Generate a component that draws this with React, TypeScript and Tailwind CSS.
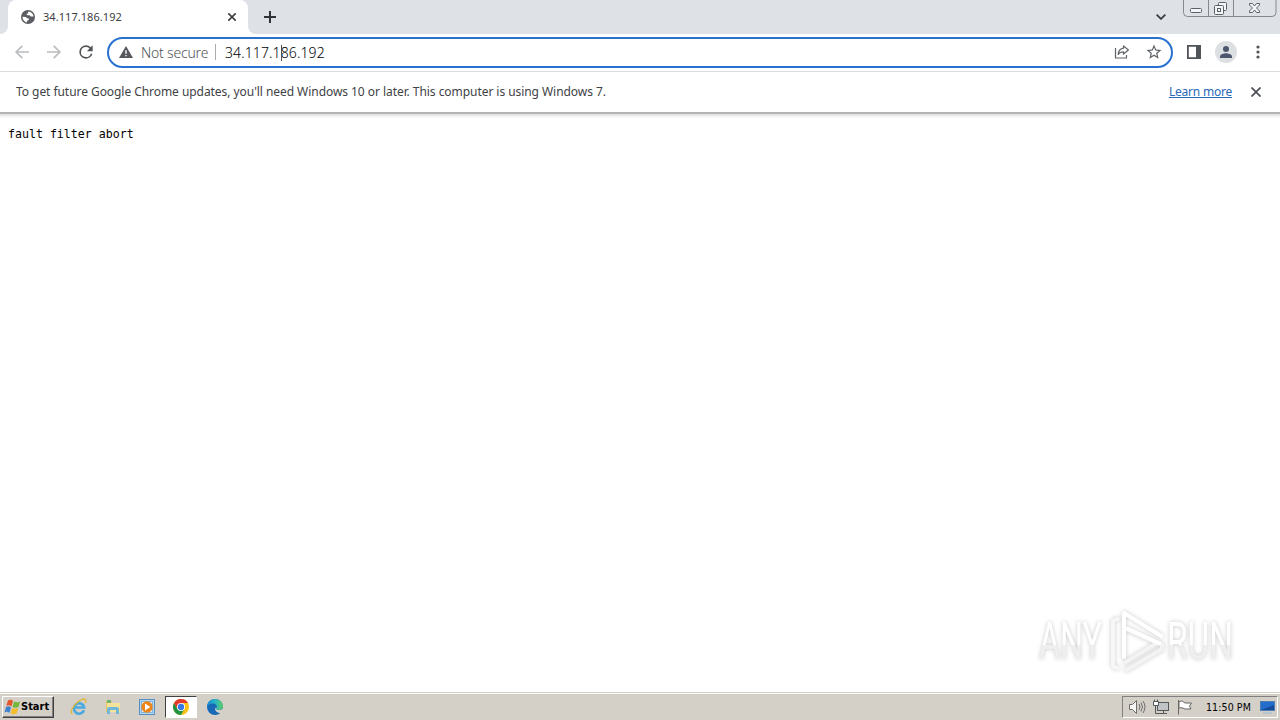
import type { ReactNode } from 'react';

function IconBox({ size, className, children }: { size: number; className?: string; children: ReactNode }) {
  return (
    <svg width={size} height={size} viewBox="0 0 24 24" fill="currentColor" className={`shrink-0 ${className ?? ''}`}>
      {children}
    </svg>
  );
}

function TabStrip() {
  return (
    <div className="relative flex h-[34px] bg-[#dee1e6] text-[#3c4043]">
      <div className="relative ml-2 flex h-full w-60 items-center rounded-t-lg bg-white">
        <svg className="absolute bottom-0 -left-2" width="8" height="8" fill="white">
          <path d="M8 0v8H0a8 8 0 0 0 8-8z" />
        </svg>
        <svg className="absolute -right-2 bottom-0" width="8" height="8" fill="white">
          <path d="M0 0v8h8a8 8 0 0 1-8-8z" />
        </svg>
        <svg className="ml-[13px]" width="14" height="14" viewBox="0 0 14 14">
          <circle cx="7" cy="7" r="7" fill="#5a5d61" />
          <path d="M7.3 1.5c2.8.1 5 2.2 5.2 5H9.8L8.700 5.300H6.300L5.400 4.100l1.500-.7zM1.500 6.800l3.300.2 1.300 1.300h1.600v1.900l-1.700.5v1.700C3.300 12 1.500 9.700 1.500 6.800z" fill="white" />
        </svg>
        <span className="ml-2 text-[11px] tracking-[0.005em]">34.117.186.192</span>
        <svg className="absolute top-[13px] left-[220px]" width="8" height="8" stroke="#3c4043" strokeWidth="1.600">
          <path d="M0.300 0.300l7.400 7.400M7.700 0.300l-7.400 7.400" />
        </svg>
      </div>
      <svg className="mt-[11px] ml-4" width="12" height="12" stroke="#303338" strokeWidth="2">
        <path d="M6 0v12M0 6h12" />
      </svg>
      <svg className="mt-[14px] ml-auto" width="10" height="6" fill="none" stroke="#3c4043" strokeWidth="1.800">
        <path d="M0.600 0.600L5 4.900 9.400 0.600" />
      </svg>
      <svg className="mr-[3px] ml-[17px]" width="94" height="17" fill="none" stroke="#85898f">
        <path d="M0.500 0v12.500a4 4 0 0 0 4 4h84.500a4 4 0 0 0 4-4V0M25.500 0v16M50.500 0v16" />
        <g stroke="#5c6168">
          <rect x="7.500" y="8.500" width="11" height="4" rx="1" fill="#f4f5f7" />
          <rect x="35.500" y="2.500" width="8" height="8" rx="1" fill="#f4f5f7" />
          <rect x="31.500" y="5.500" width="9" height="9" rx="1" fill="#f4f5f7" />
          <rect x="34.500" y="8.500" width="3" height="3" />
          <path d="M66.500 3.500h3l2 2.500 2-2.500h3v1.500L73.500 8l3 3v1.500h-3l-2-2.500-2 2.500h-3V11l3-3-3-3z" fill="#f4f5f7" />
        </g>
      </svg>
    </div>
  );
}

function Toolbar() {
  return (
    <div className="flex h-[38px] items-center border-b border-[#dadce0] bg-white pb-px text-[#5f6368]">
      <svg className="ml-[15px]" width="14" height="14" fill="none" stroke="#babcbe" strokeWidth="1.700">
        <path d="M14 7H1.300M7.300 0.800L1.100 7l6.200 6.200" />
      </svg>
      <svg className="ml-[18px]" width="14" height="14" fill="none" stroke="#babcbe" strokeWidth="1.700">
        <path d="M0 7h12.700M6.700 0.800L12.900 7l-6.200 6.200" />
      </svg>
      <IconBox size={20} className="ml-[15px] text-[#505357]">
        <path d="M17.650 6.350A7.960 7.960 0 0 0 12 4a8 8 0 1 0 7.730 10h-2.080A6 6 0 1 1 12 6c1.660 0 3.140.69 4.220 1.780L13 11h7V4z" />
      </IconBox>
      <div className="ml-[11px] flex h-[31px] w-[1066px] items-center rounded-full border-2 border-[#2871d0]">
        <svg className="ml-[10px]" width="14" height="12" viewBox="0 0 14 12">
          <path d="M7 0l7 12H0z" fill="#55585c" />
          <path d="M6.300 4.300h1.400v3.500H6.300zM6.300 8.900h1.400v1.400H6.300z" fill="white" />
        </svg>
        <span className="ml-2 w-[68px] pt-px text-sm font-light tracking-[-0.014em] whitespace-nowrap text-[#505357]">Not secure</span>
        <div className="ml-[6px] h-4 w-px bg-[#a9abae]" />
        <div className="relative ml-[9px] pt-px text-sm font-light tracking-[0.008em] text-black">
          34.117.186.192
          <div className="absolute top-[3px] left-[56px] h-4 w-px bg-[#505050]" />
        </div>
        <svg className="ml-auto" width="16" height="14" fill="none" stroke="#5f6368" strokeWidth="1.200">
          <path d="M1.500 3v10h11v-3" />
          <path d="M9.500 0.900L14.400 5 9.500 9V6.800C7 6.700 5.500 7.500 4.200 9.400 4.500 6 6.300 3.700 9.500 3.200z" strokeLinejoin="round" />
        </svg>
        <IconBox size={18} className="mr-[8px] ml-[15px]">
          <path d="M22 9.240l-7.190-.62L12 2 9.190 8.630 2 9.240l5.460 4.730L5.820 21 12 17.270 18.180 21l-1.630-7.030zM12 15.400l-3.760 2.270 1-4.280-3.320-2.880 4.380-.38L12 6.100l1.710 4.040 4.380.38-3.320 2.880 1 4.280z" />
        </IconBox>
      </div>
      <svg className="ml-[14px]" width="14" height="14">
        <path d="M0 0h14v14H0zM1.800 1.800v10.400h7.200V1.800z" fill="#505358" fillRule="evenodd" />
      </svg>
      <div className="ml-[14px] flex size-[22px] items-center justify-center rounded-full bg-[#dde0e3]">
        <svg width="12" height="12" fill="#4b566c">
          <circle cx="6" cy="3" r="3" />
          <path d="M0 12V10.400C0 8.200 4 7.200 6 7.200s6 1 6 3.200V12z" />
        </svg>
      </div>
      <svg className="ml-[19px]" width="4" height="14" fill="#505357">
        <circle cx="2" cy="2" r="1.600" />
        <circle cx="2" cy="7" r="1.600" />
        <circle cx="2" cy="12" r="1.600" />
      </svg>
    </div>
  );
}

function InfoBar() {
  return (
    <>
      <div className="flex h-10 items-center bg-white pl-4 text-xs text-[#404246]">
        <span className="tracking-[-0.0045em] whitespace-nowrap">
          To get future Google Chrome updates, you'll need Windows 10 or later. This computer is using Windows 7.
        </span>
        <a className="ml-auto tracking-[-0.018em] text-[#2a68ba] underline">Learn more</a>
        <svg className="mr-[19px] ml-[19px]" width="10" height="10" stroke="#505357" strokeWidth="1.800">
          <path d="M0.500 0.500l9 9M9.500 0.500l-9 9" />
        </svg>
      </div>
      <div className="h-[2px] bg-[#b4b4b4]" />
      <div className="h-[4px] bg-linear-to-b from-[#dedede] to-white" />
    </>
  );
}

function Watermark() {
  return (
    <svg
      className="absolute right-[34px] bottom-[14px] overflow-visible drop-shadow-[0_0_2px_rgba(0,0,0,0.22)]"
      width="210" height="72" fontFamily="Roboto, sans-serif" fontSize="52"
    >
      <defs>
        <linearGradient id="fade" x1="0" y1="0" x2="0" y2="1">
          <stop offset="0.550" stopColor="#fff" />
          <stop offset="0.560" stopColor="#efefef" />
        </linearGradient>
      </defs>
      <text x="3" y="53" textLength="63" lengthAdjust="spacingAndGlyphs" fill="url(#fade)">ANY</text>
      <text x="131" y="53" textLength="66" lengthAdjust="spacingAndGlyphs" fill="url(#fade)">RUN</text>
      <g fill="none" strokeWidth="4" strokeLinejoin="round" transform="translate(2 1)">
        <path d="M81 11l-6 3v45l6 3" stroke="#f7f7f7" />
        <path d="M86 52V21l33 15-33 20M87 64l37-22v-6" stroke="#f3f3f3" />
        <path d="M86 51V6l39 24M88 21l35 16" stroke="#fff" />
      </g>
    </svg>
  );
}

function StartButton() {
  return (
    <div className="ml-[2px] flex h-[22px] w-[52px] items-center border border-t-white border-r-[#404040] border-b-[#404040] border-l-white bg-[#d4d0c8] shadow-[inset_-1px_-1px_0_#808080]">
      <svg className="ml-px" width="17" height="16">
        <path d="M4 1.500q3-1.500 5 .5L7.500 7.500Q5 5.500 2.300 7z" fill="#e4572a" />
        <path d="M10 2.500q3 1.500 6 0L14.500 8q-3 1.500-6 0z" fill="#75b73b" />
        <path d="M2 8q3-1.500 5 .5L5.500 14Q3 12 .5 13.500z" fill="#3f83cf" />
        <path d="M8.200 9q3 1.500 6 0l-1.500 5.500q-3 1.500-6 0z" fill="#f5bd2c" />
      </svg>
      <span className="pt-px font-['DejaVu_Sans_Condensed','DejaVu_Sans',sans-serif] text-[11px] font-bold text-black">Start</span>
    </div>
  );
}

function InternetExplorerIcon() {
  return (
    <svg width="18" height="18" fill="none">
      <path d="M14 12.200A5.200 5.200 0 1 1 14.200 9.500H5" stroke="#4ba9df" strokeWidth="2.600" />
      <path d="M2.500 15.500C-1 15 3 7.500 8.500 3.500s9-3 6.500 1.500" stroke="#e3b72e" strokeWidth="1.300" />
    </svg>
  );
}

function ExplorerIcon() {
  return (
    <svg width="18" height="18">
      <path d="M2 3h5l1 2h7v9H2z" fill="#e7c65b" />
      <path d="M3 2h4v3H3z" fill="#72b36d" />
      <path d="M3 5h13v9H3z" fill="#f5e39c" />
      <path d="M3 16v-5q0-2 2-2h8q2 0 2 2v5h-3v-4H6v4z" fill="#71b7d8" />
    </svg>
  );
}

function MediaPlayerIcon() {
  return (
    <svg width="18" height="18">
      <rect x="1.500" y="1.500" width="15" height="15" fill="#b7d6ef" stroke="#5590c5" />
      <rect x="3.500" y="3.500" width="11" height="11" fill="#e0edf8" stroke="#85b2d9" />
      <circle cx="9" cy="9" r="5.700" fill="#ef8519" />
      <path d="M7 5.500L12.300 9 7 12.500z" fill="white" />
    </svg>
  );
}

function ChromeIcon() {
  return (
    <svg width="16" height="16" viewBox="0 0 48 48">
      <circle cx="24" cy="24" r="24" fill="#fbc116" />
      <path d="M24 24L3.200 12A24 24 0 0 1 44.800 12H24z" fill="#e33b2e" />
      <path d="M24 24L13.600 30 3.200 12A24 24 0 0 0 24 48l10.400-18z" fill="#229342" />
      <path d="M3.200 12L13.600 30 24 12z" fill="#e33b2e" />
      <circle cx="24" cy="24" r="12" fill="white" />
      <circle cx="24" cy="24" r="9.500" fill="#3978e7" />
    </svg>
  );
}

function EdgeIcon() {
  return (
    <svg width="16" height="16">
      <defs>
        <linearGradient id="wave" x1="0" x2="1">
          <stop stopColor="#198bd7" />
          <stop offset="0.500" stopColor="#28b5c6" />
          <stop offset="1" stopColor="#60cb63" />
        </linearGradient>
      </defs>
      <circle cx="8" cy="8" r="8" fill="#1769b5" />
      <path d="M0 7.500C.5 3 4 0 8 0s8 3 8 7c0 3-2 4-4.500 4-2 0-3-.8-2-2C11 6 7 3.500 4 4.800 1.800 5.500.5 6.500 0 7.500z" fill="url(#wave)" />
      <path d="M9.500 9c-1 1.200 0 2 2 2 1.700 0 3.200-.4 4.500-1.500V13l-1 1c-4 .5-8-2-6.500-5 .3-.5.700-.3 1 0z" fill="#d4d0c8" />
    </svg>
  );
}

function SystemTray() {
  return (
    <div className="ml-auto mr-[2px] flex h-[22px] w-[156px] items-center border border-t-[#808080] border-r-white border-b-white border-l-[#808080]">
      <svg className="ml-[6px]" width="17" height="16" fill="#f6f6f4" stroke="#6d6d6d">
        <path d="M.5 5.500h3l4-4v13l-4-4h-3z" />
        <path d="M10 5q2 3 0 6M12 3.500q3 4.500 0 9M14 2q4 6 0 12" fill="none" />
      </svg>
      <svg className="ml-[7px]" width="17" height="16" fill="none" stroke="#55585a">
        <rect x="4.500" y="3.500" width="11" height="8" fill="#c1c4c4" />
        <path d="M.5 2.500h5v4h-5zM1.500 2V.5M4.500 2V.5" fill="white" />
        <path d="M2.500 7v7.500H7M10.500 12v2M6 14.500h8" />
      </svg>
      <svg className="ml-[7px]" width="16" height="16" stroke="#666" fill="white">
        <path d="M1.500 1v14.500M2 2.500q3-2 6 1.500h6.500l-2 3 1.500 3H8q-3-2-6-1z" />
      </svg>
      <span className="ml-[13px] w-[47px] pt-px font-['DejaVu_Sans_Condensed','DejaVu_Sans',sans-serif] text-[10.500px] tracking-[0.01em] whitespace-nowrap text-black">11:50 PM</span>
      <svg className="ml-[7px]" width="15" height="14">
        <path d="M0 1h15v10H0z" fill="#4b7fb5" />
        <path d="M1 2h13v8H1z" fill="#246dcb" />
        <path d="M1 10L14 5v5z" fill="#164a9b" />
        <path d="M3 12h9v2H3z" fill="#b7c6ce" />
      </svg>
    </div>
  );
}

function Taskbar() {
  return (
    <div className="flex h-7 items-center border-t border-[#d4d0c8] bg-[#d4d0c8] pt-px shadow-[inset_0_1px_0_white]">
      <StartButton />
      <div className="ml-[16px] flex items-center gap-4">
        <InternetExplorerIcon />
        <ExplorerIcon />
        <MediaPlayerIcon />
      </div>
      <div className="ml-[9px] flex h-[22px] w-8 items-center justify-center border border-t-[#404040] border-r-white border-b-white border-l-[#404040] bg-white">
        <ChromeIcon />
      </div>
      <div className="ml-[10px]">
        <EdgeIcon />
      </div>
      <SystemTray />
    </div>
  );
}

export default function App() {
  return (
    <div className="flex h-[720px] w-[1280px] flex-col overflow-hidden bg-white font-['Noto_Sans',sans-serif]">
      <TabStrip />
      <Toolbar />
      <InfoBar />
      <main className="relative flex-1 bg-white pt-[8px]">
        <pre className="ml-[8px] font-['DejaVu_Sans_Mono',monospace] text-[11.600px] leading-4 text-black">fault filter abort</pre>
        <Watermark />
      </main>
      <Taskbar />
    </div>
  );
}
